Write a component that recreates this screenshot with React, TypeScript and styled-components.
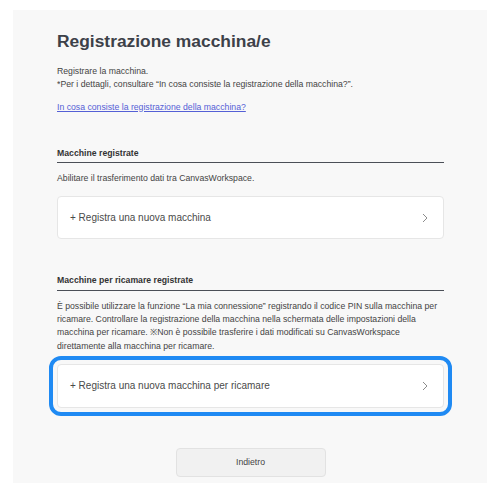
import { FC } from "react";
import styled, { createGlobalStyle } from "styled-components";

const GlobalStyle = createGlobalStyle`
	body {
		margin: 0;
		background: #ffffff;
		font-family: "Liberation Sans", Arial, sans-serif;
		color: #444;
	}
`;

interface ICardProps {
	label: string;
	focused?: boolean;
}

const MachineCard: FC<ICardProps> = ({ label, focused }) => {
	return (
		<Card type="button" $focused={focused}>
			<span>{label}</span>
			<svg width="6" height="10" viewBox="0 0 6 10">
				<polyline points="1,1 5,5 1,9" fill="none" stroke="#8c8c8c" strokeWidth="1" />
			</svg>
		</Card>
	);
};

const App: FC = () => {
	return (
		<>
			<GlobalStyle />
			<Panel>
				<Title>Registrazione macchina/e</Title>
				<Text>
					Registrare la macchina.
					<br />
					*Per i dettagli, consultare “In cosa consiste la registrazione della macchina?”.
				</Text>
				<HelpLink href="#">In cosa consiste la registrazione della macchina?</HelpLink>

				<Section>
					<SubTitle>Macchine registrate</SubTitle>
					<Text>Abilitare il trasferimento dati tra CanvasWorkspace.</Text>
					<MachineCard label="+ Registra una nuova macchina" />
				</Section>

				<Section>
					<SubTitle>Macchine per ricamare registrate</SubTitle>
					<Text>
						È possibile utilizzare la funzione “La mia connessione” registrando il codice PIN sulla
						macchina per ricamare. Controllare la registrazione della macchina nella schermata delle
						impostazioni della macchina per ricamare. ※Non è possibile trasferire i dati modificati su
						CanvasWorkspace direttamente alla macchina per ricamare.
					</Text>
					<MachineCard label="+ Registra una nuova macchina per ricamare" focused />
				</Section>

				<Footer>
					<BackBtn type="button">Indietro</BackBtn>
				</Footer>
			</Panel>
		</>
	);
};

export default App;

const Panel = styled.main`
	margin: 10px 13px 0;
	width: 474px;
	box-sizing: border-box;
	background: #f8f8f8;
	padding: 21px 43px 6px 44px;
	display: flex;
	flex-direction: column;
`;

const Title = styled.h1`
	margin: 0 0 13px;
	font-size: 17.4px;
	line-height: 21px;
	font-weight: 700;
	color: #3d4149;
`;

const Text = styled.p`
	margin: 0;
	font-size: 8.7px;
	line-height: 13.3px;
	color: #444;
`;

const HelpLink = styled.a`
	margin-top: 9px;
	align-self: flex-start;
	font-size: 8.7px;
	line-height: 13.3px;
	color: #5560d6;
	text-decoration: underline;
`;

const Section = styled.section`
	margin-top: 33px;
	display: flex;
	flex-direction: column;
	gap: 9px;

	& + & {
		margin-top: 35px;
	}
`;

const SubTitle = styled.h2`
	margin: 0;
	padding-bottom: 2px;
	font-size: 8.7px;
	line-height: 13.3px;
	font-weight: 700;
	color: #333;
	border-bottom: 1.5px solid #4b4f57;
`;

const Card = styled.button<{ $focused?: boolean }>`
	margin-top: 2px;
	height: ${({ $focused }) => ($focused ? "44px" : "43px")};
	display: flex;
	align-items: center;
	justify-content: space-between;
	padding: 0 15px 0 12px;
	background: #ffffff;
	border: 1px solid #e6e6e6;
	border-radius: 4px;
	font-family: inherit;
	font-size: 10px;
	color: #4a4a4a;
	text-align: left;
	cursor: pointer;
	outline: ${({ $focused }) => ($focused ? "4px solid #1f8af3" : "none")};
	outline-offset: 4px;
`;

const Footer = styled.div`
	margin-top: 40px;
	display: flex;
	justify-content: center;
`;

const BackBtn = styled.button`
	width: 150px;
	height: 29px;
	background: #f1f1f1;
	border: 1px solid #e2e2e2;
	border-radius: 4px;
	font-family: inherit;
	font-size: 8.7px;
	color: #444;
	cursor: pointer;
`;
